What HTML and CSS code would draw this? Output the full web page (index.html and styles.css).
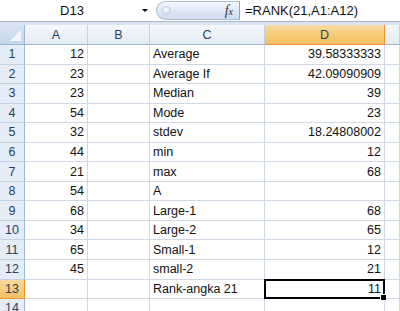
FILE: index.html
```html
<!DOCTYPE html>
<html>
<head>
<meta charset="utf-8">
<link rel="stylesheet" href="styles.css">
</head>
<body>
<div class="fbar">
  <div class="namebox"><span class="name">D13</span><span class="arrow"></span></div>
  <div class="pill"><span class="knob"></span><span class="fx">f<small>x</small></span></div>
  <div class="formula">=RANK(21,A1:A12)</div>
</div>
<div class="strip"></div>
<div class="sheet">
  <div class="hd corner"><span class="tri"></span></div>
  <div class="hd col">A</div><div class="hd col">B</div><div class="hd col">C</div><div class="hd col sel">D</div><div class="hd col"></div>

  <div class="hd row">1</div><div class="c n">12</div><div class="c"></div><div class="c t">Average</div><div class="c n">39.58333333</div><div class="c"></div>
  <div class="hd row">2</div><div class="c n">23</div><div class="c"></div><div class="c t">Average If</div><div class="c n">42.09090909</div><div class="c"></div>
  <div class="hd row">3</div><div class="c n">23</div><div class="c"></div><div class="c t">Median</div><div class="c n">39</div><div class="c"></div>
  <div class="hd row">4</div><div class="c n">54</div><div class="c"></div><div class="c t">Mode</div><div class="c n">23</div><div class="c"></div>
  <div class="hd row">5</div><div class="c n">32</div><div class="c"></div><div class="c t">stdev</div><div class="c n">18.24808002</div><div class="c"></div>
  <div class="hd row">6</div><div class="c n">44</div><div class="c"></div><div class="c t">min</div><div class="c n">12</div><div class="c"></div>
  <div class="hd row">7</div><div class="c n">21</div><div class="c"></div><div class="c t">max</div><div class="c n">68</div><div class="c"></div>
  <div class="hd row">8</div><div class="c n">54</div><div class="c"></div><div class="c t">A</div><div class="c n"></div><div class="c"></div>
  <div class="hd row">9</div><div class="c n">68</div><div class="c"></div><div class="c t">Large-1</div><div class="c n">68</div><div class="c"></div>
  <div class="hd row">10</div><div class="c n">34</div><div class="c"></div><div class="c t">Large-2</div><div class="c n">65</div><div class="c"></div>
  <div class="hd row">11</div><div class="c n">65</div><div class="c"></div><div class="c t">Small-1</div><div class="c n">12</div><div class="c"></div>
  <div class="hd row">12</div><div class="c n">45</div><div class="c"></div><div class="c t">small-2</div><div class="c n">21</div><div class="c"></div>
  <div class="hd row sel">13</div><div class="c n"></div><div class="c"></div><div class="c t">Rank-angka 21</div><div class="c n active">11</div><div class="c"></div>
  <div class="hd row">14</div><div class="c"></div><div class="c"></div><div class="c"></div><div class="c"></div><div class="c"></div>
</div>
</body>
</html>
```
FILE: styles.css
```css
html, body {
  margin: 0;
  padding: 0;
  width: 400px;
  height: 311px;
  overflow: hidden;
  background: #ffffff;
  font-family: "Liberation Sans", Arial, sans-serif;
}

.fbar {
  display: flex;
  height: 21px;
  background: #ffffff;
  border-bottom: 1px solid #a7b7cc;
}

.namebox {
  width: 150px;
  display: flex;
  align-items: center;
  position: relative;
}

.name {
  flex: 1;
  text-align: center;
  font-size: 13px;
  color: #111111;
  padding-left: 2px;
}

.arrow {
  width: 0;
  height: 0;
  border-left: 3px solid transparent;
  border-right: 3px solid transparent;
  border-top: 3px solid #000000;
  margin-right: 2px;
}

.pill {
  margin-left: 6px;
  width: 84px;
  height: 19px;
  margin-top: 1px;
  border: 1px solid #a9bdd6;
  border-right: 1px solid #8ea4bf;
  border-radius: 10px 0 0 10px;
  background: linear-gradient(#f4f8fd, #dce7f5 55%, #cfdcee);
  display: flex;
  align-items: center;
  justify-content: space-between;
  box-sizing: border-box;
}

.knob {
  width: 7px;
  height: 7px;
  border-radius: 50%;
  margin-left: 5px;
  background: radial-gradient(circle at 40% 35%, #ffffff, #c4d0de);
  border: 1px solid #c7d2df;
}

.fx {
  font-family: "Liberation Serif", "Times New Roman", serif;
  font-style: italic;
  font-size: 14px;
  color: #333333;
  margin-right: 6px;
}

.fx small {
  font-size: 10px;
}

.formula {
  flex: 1;
  padding-left: 5px;
  font-size: 13px;
  line-height: 21px;
  color: #111111;
}

.strip {
  height: 3px;
  background: #dbe5f2;
}

.sheet {
  display: grid;
  grid-template-columns: 25px 63px 62px 115px 120px 1fr;
  grid-template-rows: 20px repeat(14, 19.55px);
  font-size: 12.5px;
  color: #111111;
}

.hd {
  box-sizing: border-box;
  background: linear-gradient(#f5f8fc, #e4ebf5);
  border-right: 1px solid #c5d2e2;
  border-bottom: 1px solid #9eb6ce;
  color: #27415f;
  display: flex;
  align-items: center;
  justify-content: center;
  font-size: 12.5px;
}

.hd.row {
  background: #e4ecf7;
  border-right: 1px solid #9eb6ce;
  border-bottom: 1px solid #c5d2e2;
}

.hd.corner {
  position: relative;
  background: linear-gradient(#d8e3f2, #c5d6ec);
  border-right: 1px solid #9eb6ce;
}

.tri {
  position: absolute;
  right: 3px;
  bottom: 3px;
  width: 0;
  height: 0;
  border-left: 11px solid transparent;
  border-bottom: 11px solid #f4f8fd;
}

.hd.col.sel {
  background: linear-gradient(#f9dba4, #f6c971 60%, #f3c062);
  border-bottom: 1px solid #f29436;
  border-right: 1px solid #f29436;
  color: #27415f;
}

.hd.row.sel {
  background: linear-gradient(#f9d99f, #f3c062);
  border-right: 1px solid #f29436;
  border-bottom: 1px solid #f29436;
}

.c {
  box-sizing: border-box;
  border-right: 1px solid #d0d7e5;
  border-bottom: 1px solid #d0d7e5;
  display: flex;
  align-items: center;
  white-space: nowrap;
  overflow: visible;
}

.c.n {
  justify-content: flex-end;
  padding-right: 3px;
}

.c.t {
  padding-left: 3px;
}

.c.active {
  position: relative;
}

.c.active::after {
  content: "";
  position: absolute;
  left: -1px;
  top: -1px;
  right: -1px;
  bottom: -1px;
  border: 2px solid #000000;
}

.c.active::before {
  content: "";
  position: absolute;
  right: -3px;
  bottom: -3px;
  width: 5px;
  height: 5px;
  background: #000000;
  border: 1px solid #ffffff;
  z-index: 1;
}
```
